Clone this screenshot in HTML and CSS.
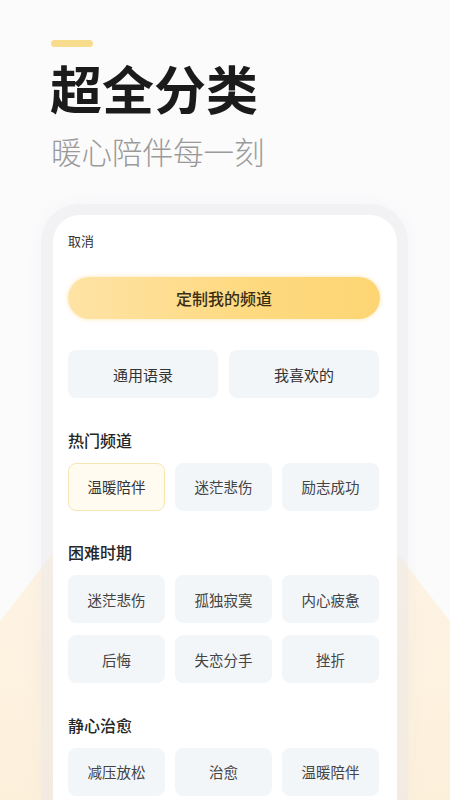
FILE: index.html
```html
<!DOCTYPE html>
<html lang="zh-CN">
<head>
<meta charset="utf-8">
<title>超全分类</title>
<link rel="stylesheet" href="styles.css">
</head>
<body>
<div class="page">
  <div class="peach"></div>
  <header class="hero">
    <div class="accent"></div>
    <h1 class="title">超全分类</h1>
    <p class="subtitle">暖心陪伴每一刻</p>
  </header>
  <div class="frame">
    <div class="card">
      <div class="cancel">取消</div>
      <div class="primary">定制我的频道</div>
      <div class="pair">
        <div class="pill">通用语录</div>
        <div class="pill">我喜欢的</div>
      </div>
      <section class="group">
        <h2 class="heading">热门频道</h2>
        <div class="grid">
          <div class="chip chip-on">温暖陪伴</div>
          <div class="chip">迷茫悲伤</div>
          <div class="chip">励志成功</div>
        </div>
      </section>
      <section class="group">
        <h2 class="heading">困难时期</h2>
        <div class="grid">
          <div class="chip">迷茫悲伤</div>
          <div class="chip">孤独寂寞</div>
          <div class="chip">内心疲惫</div>
          <div class="chip">后悔</div>
          <div class="chip">失恋分手</div>
          <div class="chip">挫折</div>
        </div>
      </section>
      <section class="group">
        <h2 class="heading">静心治愈</h2>
        <div class="grid">
          <div class="chip">减压放松</div>
          <div class="chip">治愈</div>
          <div class="chip">温暖陪伴</div>
        </div>
      </section>
    </div>
  </div>
</div>
</body>
</html>
```
FILE: styles.css
```css
* { box-sizing: border-box; }
html, body {
  margin: 0;
  padding: 0;
}
body {
  background: #fbfbfc;
  font-family: "Noto Sans CJK SC", "Noto Sans", sans-serif;
  color: #222;
}
.page {
  position: relative;
  width: 450px;
  height: 800px;
  overflow: hidden;
  display: flex;
  flex-direction: column;
}
.peach {
  position: absolute;
  left: 0;
  top: 0;
  width: 450px;
  height: 800px;
  background: linear-gradient(180deg, #fef7ec 40%, #fdf0db 100%);
  clip-path: polygon(225px 330px, 480px 660px, 480px 820px, -30px 820px, -30px 660px);
  z-index: 0;
}
.hero {
  position: relative;
  z-index: 1;
  padding-left: 51px;
  padding-top: 40px;
}
.accent {
  width: 42px;
  height: 7px;
  border-radius: 4px;
  background: #f8dc8e;
}
.title {
  margin: 11px 0 0 -1px;
  font-size: 52px;
  line-height: 60px;
  font-weight: 700;
  color: #1b1b1b;
  letter-spacing: 0;
}
.subtitle {
  margin: 13px 0 0 0;
  font-size: 30.5px;
  line-height: 40px;
  font-weight: 300;
  color: #9a9a9a;
}
.frame {
  position: relative;
  z-index: 1;
  margin: 33px 0 0 41px;
  width: 367px;
  flex: 1;
  padding: 11px 11px 0 12px;
  border-radius: 38px 38px 0 0;
  background: rgba(228, 228, 234, 0.42);
  box-shadow: 0 0 18px rgba(200, 200, 210, 0.12);
}
.card {
  height: 100%;
  background: #ffffff;
  border-radius: 27px 27px 0 0;
  padding: 16px 0 0 15px;
}
.cancel {
  font-size: 13px;
  line-height: 20px;
  color: #333;
}
.primary {
  margin-top: 26px;
  width: 312px;
  height: 42px;
  border-radius: 21px;
  background: linear-gradient(90deg, #fee3a5 0%, #fed97f 60%, #fdd573 100%);
  box-shadow: 0 0 4px rgba(253, 210, 110, 0.55);
  display: flex;
  align-items: center;
  justify-content: center;
  font-size: 16px;
  font-weight: 500;
  color: #3a2f14;
}
.pair {
  margin-top: 31px;
  width: 311px;
  display: grid;
  grid-template-columns: 1fr 1fr;
  gap: 11px;
}
.pill {
  height: 48px;
  border-radius: 8px;
  background: #f3f6f9;
  display: flex;
  align-items: center;
  justify-content: center;
  font-size: 15px;
  color: #333;
}
.group {
  margin-top: 30.5px;
}
.heading {
  margin: 0 0 12px 0;
  font-size: 16px;
  line-height: 22px;
  font-weight: 500;
  color: #262626;
}
.grid {
  width: 311px;
  display: grid;
  grid-template-columns: repeat(3, 1fr);
  column-gap: 10px;
  row-gap: 12px;
}
.chip {
  height: 48px;
  border-radius: 8px;
  background: #f3f6f9;
  border: 1px solid #f3f6f9;
  display: flex;
  align-items: center;
  justify-content: center;
  font-size: 14.5px;
  color: #444;
}
.chip-on {
  background: #fffbf1;
  border-color: #f6e6b6;
  color: #333;
}
```
